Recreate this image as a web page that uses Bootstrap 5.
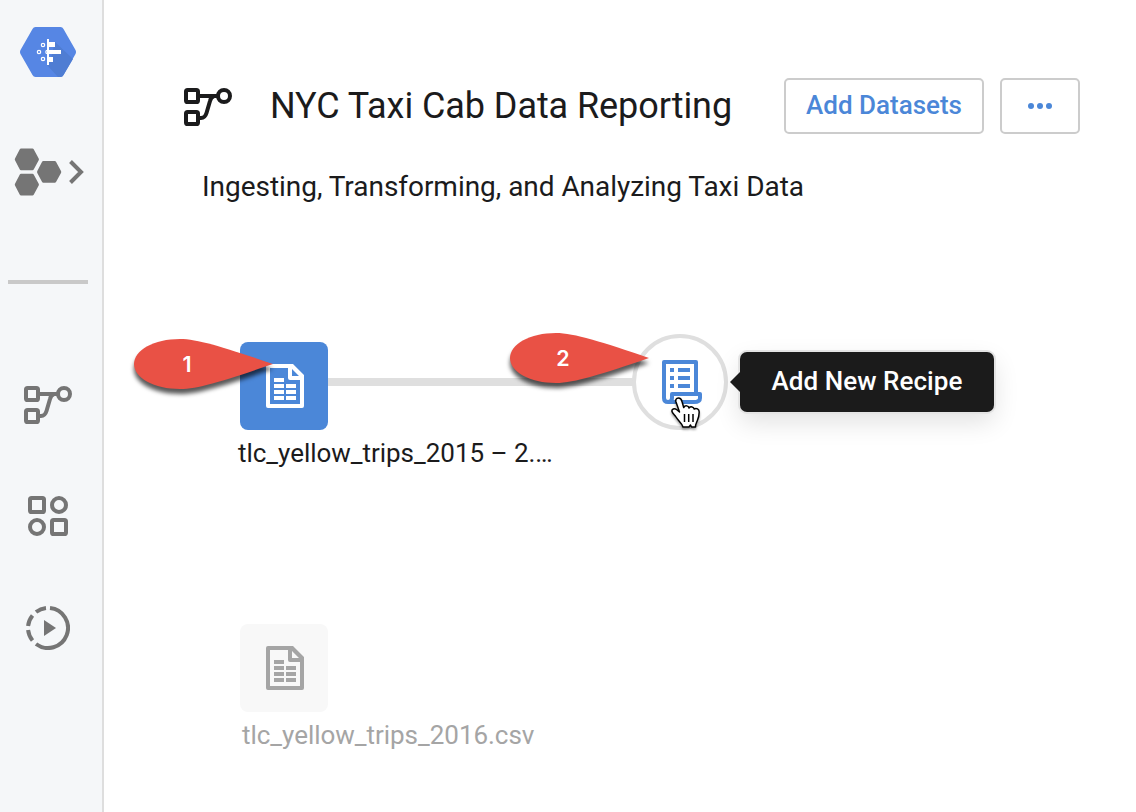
<!DOCTYPE html>
<html lang="en">
<head>
<meta charset="utf-8">
<meta name="viewport" content="width=device-width, initial-scale=1">
<title>NYC Taxi Cab Data Reporting</title>
<link rel="stylesheet" href="https://cdn.jsdelivr.net/npm/bootstrap@5.3.0/dist/css/bootstrap.min.css">
<style>
body{font-family:Roboto,"Liberation Sans",sans-serif;color:#1b1b1c;background:#fff;overflow:hidden}
svg{display:block;flex:none}
.side{width:104px;background:#f5f7f9;border-right:2px solid #dedede;color:#757575;padding:27px 0 0 8px}
.side .slot{width:80px}
.rule{width:80px;height:4px;background:#c9c9c9;margin:85px 0 102px}
.head{padding:78px 56px 0 80px;height:134px}
.title{font-size:36px;line-height:42px;letter-spacing:-.07px;margin:7px 0 0 38px;font-weight:400}
.tool{height:56px;border:2px solid #ccc;border-radius:5px;background:#fff;color:#4b87d8;font-size:26px;font-weight:500;line-height:50px;padding:0 0 2px}
.desc{font-size:28px;line-height:34px;margin:36px 0 0 98px;letter-spacing:-.04px}
.canvas{height:608px}
.canvas>*{position:absolute;margin-top:-1px}
.tile{width:88px;height:88px;border-radius:8px;background:#4b87d8;color:#fff;padding:22px 0 0 26px}
.tile.off{background:#f8f8f8;color:#a5a5a5}
.link-line{left:224px;top:175px;width:306px;height:8px;background:#dfdfdf}
.recipe{left:528px;top:131px;width:96px;height:96px;border:4px solid #dfdfdf;background:#fff;color:#4b87d8;padding:22px 0 0 26px}
.name{font-size:26px;line-height:32px;white-space:nowrap;letter-spacing:-.03px}
.tip{left:636px;top:149px;width:254px;height:60px;background:#1b1b1b;color:#fff;border-radius:7px;font-size:26px;font-weight:500;line-height:58px;letter-spacing:.05px;text-align:center;box-shadow:0 0 0 2px #e4e4e4,0 10px 26px rgba(0,0,0,.12)}
.tip::before{content:"";position:absolute;left:-10px;top:20px;border:10px solid transparent;border-left:0;border-right-color:#1b1b1b}
.pin text{font:600 21.500px Inter,Arial,sans-serif;fill:#fff;text-anchor:middle}
.pin{overflow:visible}
.pin path{filter:drop-shadow(0 5px 2px rgba(0,0,0,.65))}
</style>
</head>
<body>
<svg width="0" height="0" class="position-absolute">
<defs>
<symbol id="flow" viewBox="0 0 48 38"><g fill="none" stroke="currentColor" stroke-width="4"><rect x="2" y="2" width="12" height="12" rx="1.600"/><rect x="2" y="24" width="12" height="12" rx="1.600"/><circle cx="40" cy="8" r="6"/><path d="M16 8h18M15 30h2q4 0 5.500-5l3.500-12q1-4 4-5"/></g></symbol>
<symbol id="sheet" viewBox="0 0 38 44"><path d="M2 0h25l11 11v31a2 2 0 0 1-2 2H2a2 2 0 0 1-2-2V2a2 2 0 0 1 2-2zM4 4v36h30V16H24a2 2 0 0 1-2-2V4zM26 5v7h7z" fill="currentColor" fill-rule="evenodd"/><path d="M8 14h10v4H8zM8 20h10v4H8zM8 26h10v4H8zM8 32h10v4H8zM20 20h10v4H20zM20 26h10v4H20zM20 32h10v4H20z" fill="currentColor"/></symbol>
</defs>
</svg>
<div class="d-flex vh-100">
<aside class="side flex-shrink-0">
<div class="slot d-flex justify-content-center">
<svg width="56" height="50" viewBox="0 0 56 50"><path d="M15.500 0h25q2 0 3 2L55.500 23q1 2 0 4L43.500 48q-1 2-3 2h-25q-2 0-3-2L.5 27q-1-2 0-4L12.500 2q1-2 3-2z" fill="#5686e4"/><path d="M35 15L53 32 43.500 48q-1 2-3 2H38L27 38l4-7z" fill="#4f7dd3"/><path d="M27 12h2v3h6v5h-6v3h12v4H29v3h4v5h-4v3h-2z" fill="#fff"/><g fill="none" stroke="#fff" stroke-width="1.200"><circle cx="23" cy="18" r="1.700"/><circle cx="19" cy="25" r="1.700"/><circle cx="23" cy="32" r="1.700"/><path d="M27.500 23.300a1.700 1.700 0 0 0 0 3.400"/></g></svg>
</div>
<div class="slot" style="margin-top:71px;padding-left:6px">
<svg width="72" height="48" viewBox="0 0 72 48" fill="currentColor"><path id="hx" d="M7 .5h11.500q.8 0 1.200.7L24.700 10.500q.5.900 0 1.800L19.700 21.500q-.4.700-1.200.7H7q-.8 0-1.200-.7L1 12.300q-.5-.9 0-1.800L5.800 1.200Q6.200.5 7 .5z"/><use href="#hx" y="25.200"/><use href="#hx" x="22.300" y="12.600"/><path d="M56.500 13.500L67 24 56.500 34.500" fill="none" stroke="currentColor" stroke-width="4"/></svg>
</div>
<div class="rule" style="margin-top:84px"></div>
<div class="slot d-flex justify-content-center"><svg width="48" height="38"><use href="#flow"/></svg></div>
<div class="slot d-flex justify-content-center" style="margin-top:72px"><svg width="40" height="40" fill="none" stroke="currentColor" stroke-width="4"><rect x="2" y="2" width="14" height="14" rx="1.600"/><circle cx="31" cy="9" r="7"/><circle cx="9" cy="31" r="7"/><rect x="24" y="24" width="14" height="14" rx="1.600"/></svg></div>
<div class="slot d-flex justify-content-center" style="margin-top:70px"><svg width="44" height="44" fill="none" stroke="currentColor" stroke-width="4"><path d="M24 2.100A20 20 0 1 1 10 38M20 2.100A20 20 0 0 0 10 6M6.500 9.500A20 20 0 0 0 2.100 20M2.100 24A20 20 0 0 0 6.500 34.500"/><path d="M18 14l12 8-12 8z" fill="currentColor" stroke="none"/></svg></div>
</aside>
<main class="flex-grow-1">
<header class="head d-flex align-items-start">
<svg width="48" height="38" style="margin-top:10px"><use href="#flow"/></svg>
<h1 class="title text-nowrap">NYC Taxi Cab Data Reporting</h1>
<div class="d-flex gap-3 ms-auto">
<button class="tool" style="width:200px">Add Datasets</button>
<button class="tool d-flex align-items-center justify-content-center pb-0" style="width:80px" aria-label="More"><svg width="24" height="6" fill="currentColor"><circle cx="3" cy="3" r="3"/><circle cx="12" cy="3" r="3"/><circle cx="21" cy="3" r="3"/></svg></button>
</div>
</header>
<p class="desc text-nowrap">Ingesting, Transforming, and Analyzing Taxi Data</p>
<section class="canvas position-relative">
<div class="link-line"></div>
<div class="tile" style="left:136px;top:139px"><svg width="38" height="44"><use href="#sheet"/></svg></div>
<div class="name" style="left:134px;top:234px">tlc_yellow_trips_2015 – 2.…</div>
<div class="recipe rounded-circle">
<svg width="40" height="44" viewBox="0 0 40 44"><g fill="none" stroke="currentColor" stroke-width="4"><path d="M34 32V2H2v36q0 4 4 4h26q6 0 6-4v-4H10v4q0 4-4 4" stroke-linejoin="round"/></g><path d="M8 8h4v4H8zM8 16h4v4H8zM8 24h4v4H8zM16 8h12v4H16zM16 16h12v4H16zM16 24h12v4H16z" fill="currentColor"/></svg>
</div>
<div class="tip">Add New Recipe</div>
<svg class="pin" style="left:30px;top:136px" width="139" height="50"><path d="M0 25C0 11 20 0 46 0c18 0 46 9 93 25C92 41 64 50 46 50 20 50 0 39 0 25z" fill="#e95145"/><text x="53" y="33">1</text></svg>
<svg class="pin" style="left:406px;top:130px" width="139" height="50"><path d="M0 25C0 11 20 0 46 0c18 0 46 9 93 25C92 41 64 50 46 50 20 50 0 39 0 25z" fill="#e95145"/><text x="53" y="33">2</text></svg>
<svg style="left:566px;top:193px;filter:drop-shadow(0 2px 1px rgba(0,0,0,.35))" width="32" height="34" viewBox="0 0 32 34"><path d="M8.500 2c2 0 3 1.500 3.500 3.500l1.700 6c1.500-2.500 4.800-2 5.300.5 1.700-2 4.700-1.200 5.200 1 2.200-1.300 5 0 5 3 0 4-.7 6-2 9-.8 2-1.700 3-1.700 6h-4l-1-2-1.500 2h-6c-1-4-5-6.500-7-10-1.200-2-3.500-3.500-4-5.500-.6-2.500 2.500-3.500 4.500-2l3 2.500L6 6C5.400 4 6 2 8.500 2z" fill="#fff" stroke="#000" stroke-width="1.500" stroke-linejoin="round"/><path d="M14.500 18v8M18.700 18v8M23 18v8" stroke="#000" stroke-width="1.500"/></svg>
<div class="tile off" style="left:136px;top:421px"><svg width="38" height="44"><use href="#sheet"/></svg></div>
<div class="name" style="left:138px;top:516px;color:#a5a5a5">tlc_yellow_trips_2016.csv</div>
</section>
</main>
</div>
<script src="https://cdn.jsdelivr.net/npm/bootstrap@5.3.0/dist/js/bootstrap.bundle.min.js"></script>
</body>
</html>
